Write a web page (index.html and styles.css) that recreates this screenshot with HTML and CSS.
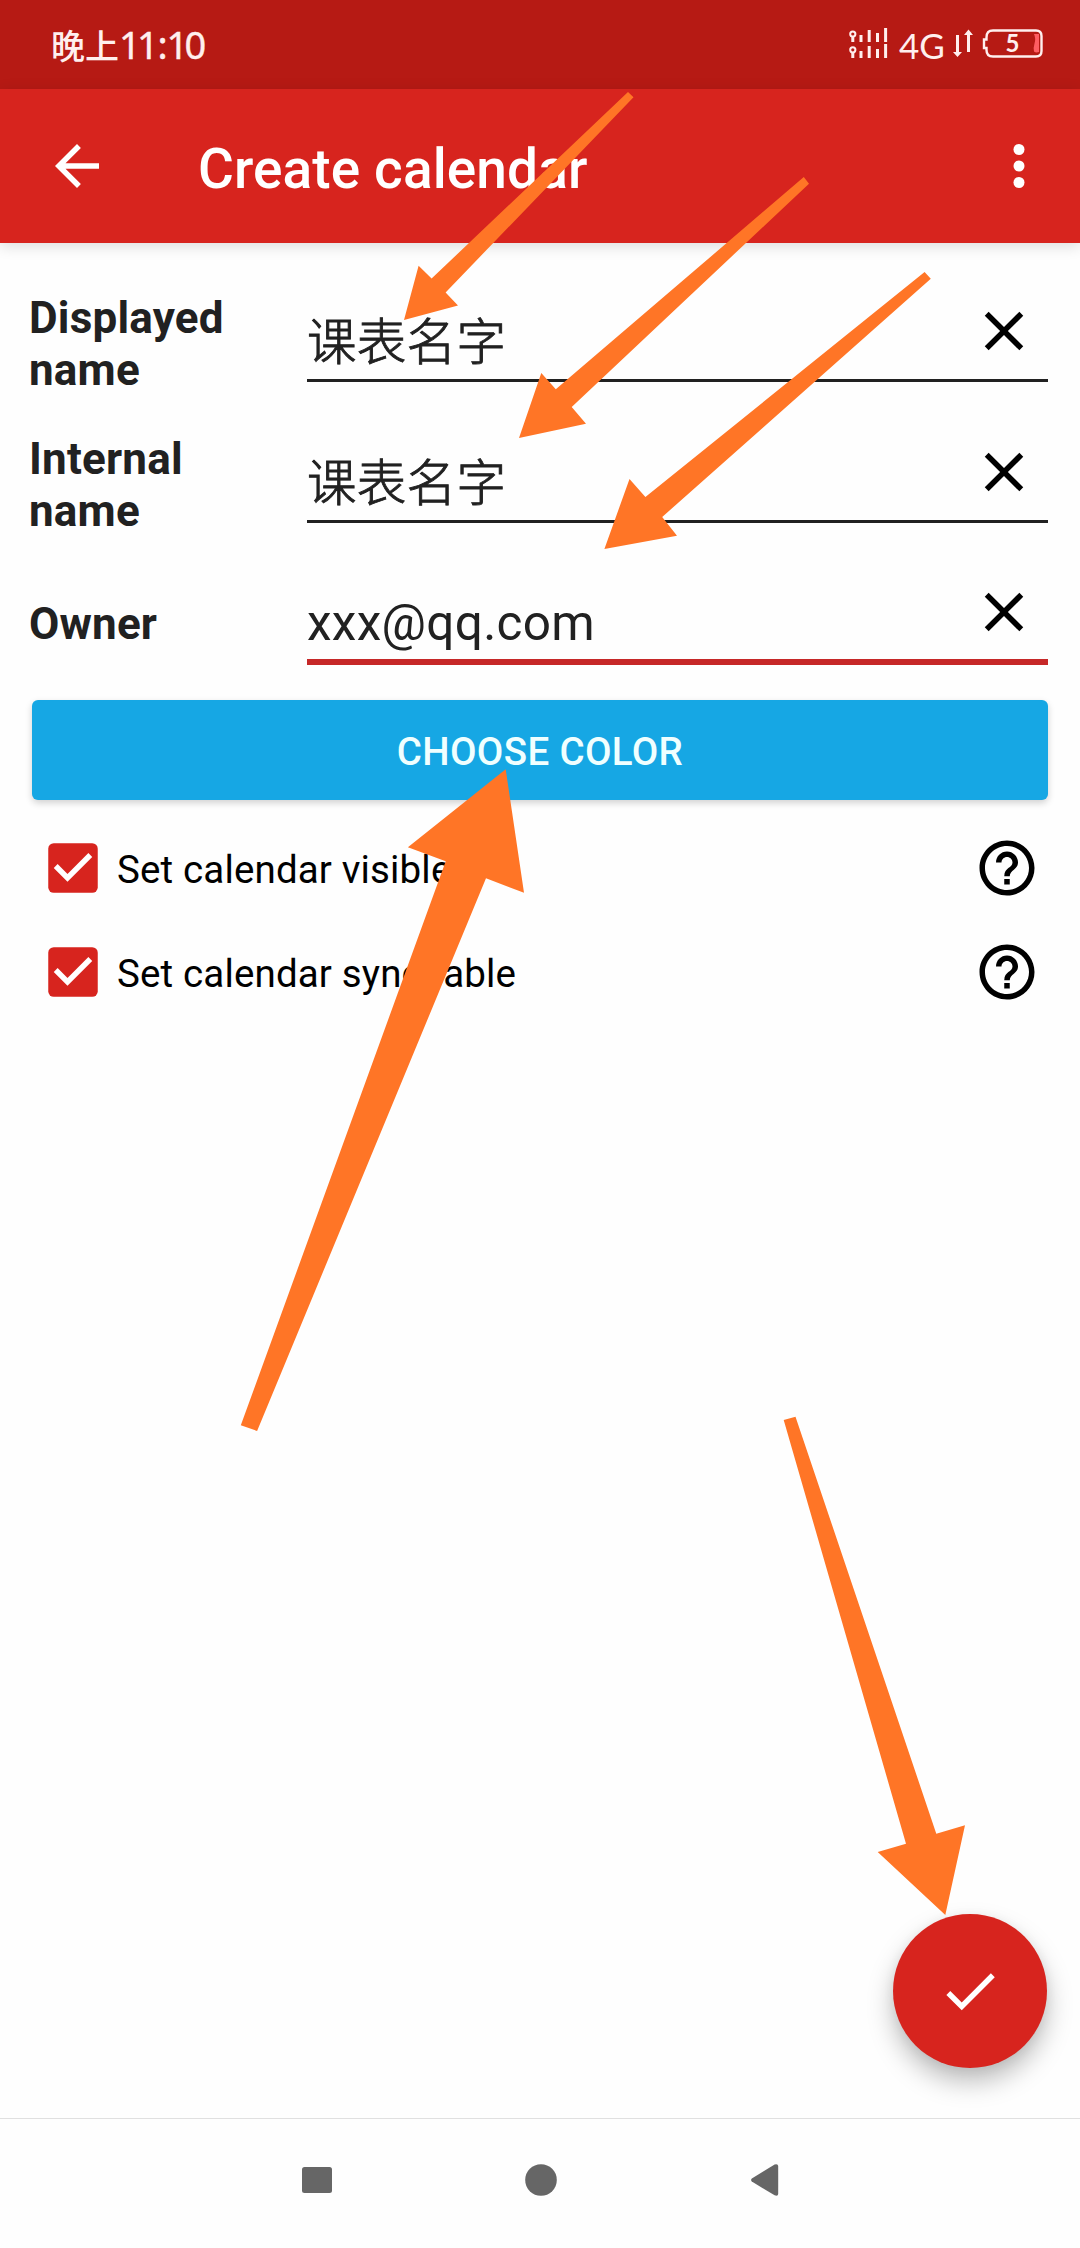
FILE: index.html
```html
<!DOCTYPE html>
<html lang="en">
<head>
<meta charset="utf-8">
<title>Create calendar</title>
<link rel="stylesheet" href="styles.css">
</head>
<body>
<div class="screen">
  <div class="status-bar">
    <div class="clock"><span class="clock-period">晚上</span><span class="clock-time">11<span class="colon">:</span>10</span></div>
    <div class="status-icons">
      <svg class="signal" width="40" height="34" viewBox="0 0 40 34" fill="none" stroke="#ffefee" stroke-width="3">
        <circle cx="3.8" cy="6" r="2.6" stroke-width="2"/><circle cx="3.8" cy="21.8" r="2.6" stroke-width="2"/>
        <path d="M3.8 8v6M12 7v7M20.2 2v12M28.5 5v9M36.6 0v14M3.8 24v6M12 23v7M20.2 18v12M28.5 21v9M36.6 16v14"/>
      </svg>
      <span class="network">4G</span>
      <svg class="traffic" width="20" height="30" viewBox="0 0 20 30" fill="none" stroke="#ffefee" stroke-width="3">
        <path d="M4.5 6v20M15.5 3v20"/>
        <path d="M0 23h9l-4.5 5zM11 6h9l-4.5-5.500z" fill="#ffefee" stroke="none"/>
      </svg>
      <svg class="battery" width="62" height="30" viewBox="0 0 62 30">
        <path d="M4.500 8.500Q4.500 1.500 11 1.500H54Q59.500 1.500 59.500 7V22Q59.500 27.500 54 27.500H11Q4.500 27.500 4.500 21V19H2V10.500H4.500Z" fill="none" stroke="#ffefee" stroke-width="2.400"/>
        <path d="M52 5h5v18q-3 1-5-.5-1-3 .5-8 1.500-5-.5-9.500z" fill="#ff5d62"/>
        <text x="30.500" y="22.500" text-anchor="middle" class="battery-level">5</text>
      </svg>
    </div>
  </div>

  <header class="app-bar">
    <svg class="icon" viewBox="0 0 24 24" fill="#fff"><path d="M20 11H7.830l5.590-5.590L12 4l-8 8 8 8 1.410-1.410L7.830 13H20v-2z"/></svg>
    <h1 class="title">Create calendar</h1>
    <svg class="icon" viewBox="0 0 24 24" fill="#fff"><circle cx="12" cy="6" r="2"/><circle cx="12" cy="12" r="2"/><circle cx="12" cy="18" r="2"/></svg>
  </header>

  <main class="form">
    <div class="row">
      <div class="label">Displayed name</div>
      <div class="field"><span class="value value-cjk">课表名字</span>
        <svg class="icon" viewBox="0 0 24 24"><path d="M19 6.410L17.590 5 12 10.590 6.410 5 5 6.410 10.590 12 5 17.590 6.410 19 12 13.410 17.590 19 19 17.590 13.410 12z"/></svg></div>
    </div>
    <div class="row">
      <div class="label">Internal name</div>
      <div class="field"><span class="value value-cjk">课表名字</span>
        <svg class="icon" viewBox="0 0 24 24"><path d="M19 6.410L17.590 5 12 10.590 6.410 5 5 6.410 10.590 12 5 17.590 6.410 19 12 13.410 17.590 19 19 17.590 13.410 12z"/></svg></div>
    </div>
    <div class="row row-single">
      <div class="label">Owner</div>
      <div class="field focused"><span class="value">xxx@qq.com</span>
        <svg class="icon" viewBox="0 0 24 24"><path d="M19 6.410L17.590 5 12 10.590 6.410 5 5 6.410 10.590 12 5 17.590 6.410 19 12 13.410 17.590 19 19 17.590 13.410 12z"/></svg></div>
    </div>
    <button class="choose" type="button">CHOOSE COLOR</button>
    <div class="option">
      <svg class="icon" viewBox="0 0 24 24"><rect x="3" y="3" width="18" height="18" rx="2" fill="#d7241e"/><path d="M10 17l-5-5 1.410-1.410L10 14.170l7.590-7.590L19 8z" fill="#fff"/></svg>
      <span class="option-text">Set calendar visible</span>
      <svg class="icon" viewBox="0 0 24 24"><path d="M11 18h2v-2h-2v2zm1-16C6.480 2 2 6.480 2 12s4.480 10 10 10 10-4.480 10-10S17.520 2 12 2zm0 18c-4.410 0-8-3.590-8-8s3.590-8 8-8 8 3.590 8 8-3.590 8-8 8zm0-14c-2.210 0-4 1.790-4 4h2c0-1.100.9-2 2-2s2 .9 2 2c0 2-3 1.750-3 5h2c0-2.250 3-2.500 3-5 0-2.210-1.790-4-4-4z"/></svg>
    </div>
    <div class="option">
      <svg class="icon" viewBox="0 0 24 24"><rect x="3" y="3" width="18" height="18" rx="2" fill="#d7241e"/><path d="M10 17l-5-5 1.410-1.410L10 14.170l7.590-7.590L19 8z" fill="#fff"/></svg>
      <span class="option-text">Set calendar synchable</span>
      <svg class="icon" viewBox="0 0 24 24"><path d="M11 18h2v-2h-2v2zm1-16C6.480 2 2 6.480 2 12s4.480 10 10 10 10-4.480 10-10S17.520 2 12 2zm0 18c-4.410 0-8-3.590-8-8s3.590-8 8-8 8 3.590 8 8-3.590 8-8 8zm0-14c-2.210 0-4 1.790-4 4h2c0-1.100.9-2 2-2s2 .9 2 2c0 2-3 1.750-3 5h2c0-2.250 3-2.500 3-5 0-2.210-1.790-4-4-4z"/></svg>
    </div>
  </main>

  <nav class="nav-bar">
    <svg width="30" height="32" viewBox="0 0 30 32"><rect y="3" width="30" height="26" rx="2.500"/></svg>
    <svg width="32" height="32" viewBox="0 0 32 32"><circle cx="16" cy="16" r="15.800"/></svg>
    <svg width="28" height="32" viewBox="0 0 28 32"><path d="M.8 14.600L23.600.5Q27 -.6 27.200 2V30Q27 32.600 23.600 31.300L.8 17.500Q-.6 16 .8 14.600z"/></svg>
  </nav>

  <div class="fab"><svg class="icon" viewBox="0 0 24 24" fill="#fff"><path d="M9 16.170L4.830 12l-1.420 1.410L9 19 21 7l-1.410-1.410z"/></svg></div>

  <!-- Guide arrows laid over the form -->
  <svg class="arrows" viewBox="0 0 1080 2248" fill="#ff7526">
    <path d="M628 92L633.500 97.200 445.600 292.500 458 305.500 404 320 418.600 265.700 431.600 278.500z"/>
    <path d="M803.800 177L809 183.700 571.700 407 586 423.700 519 438 541.300 373 555.800 389.300z"/>
    <path d="M924.600 272L930.800 278.700 662.200 517 677 535.700 604.400 549 629.500 479 645.400 497z"/>
    <path d="M240.800 1425.300L257.100 1431 486 878.300 524 892.700 505.700 769.300 407.900 847.300 445.700 861.300z"/>
    <path d="M783.700 1420L795.500 1416.700 936.300 1833.700 965 1825.300 945.300 1915 877.700 1852 906 1843.700z"/>
  </svg>
</div>
</body>
</html>
```

FILE: styles.css
```css
* { box-sizing: border-box; }

body {
  margin: 0;
  background: #fefefe;
  color: #212121;
  font-family: Roboto, "Noto Sans CJK SC", sans-serif;
}

.screen {
  position: relative;
  display: flex;
  flex-direction: column;
  width: 1080px;
  height: 2248px;
  overflow: hidden;
}

svg { display: block; flex: none; }
.icon { width: 66px; height: 66px; }

.status-bar {
  display: flex;
  justify-content: space-between;
  height: 89px;
  padding: 0 36px 0 51px;
  background: #b61a14;
  color: #ffefee;
}

.clock { display: flex; align-items: baseline; height: 88px; line-height: 88px; }
.clock-period { font-family: "Noto Sans CJK SC", sans-serif; font-size: 34px; font-weight: 500; }
.clock-time { font-family: "Noto Sans", sans-serif; font-size: 38px; letter-spacing: -3.700px; -webkit-text-stroke: .4px #ffefee; }
.colon { padding: 0 2.500px; }

.status-icons { display: flex; align-items: flex-start; padding-top: 28px; }
.network { width: 47px; margin: -3px 7px 0 10px; font: 400 35px/40px Lato, sans-serif; }
.traffic { margin-top: 1px; }
.battery { margin: 1px 0 0 9px; }
.battery-level { fill: #ffefee; font: 700 24px Lato, sans-serif; }

.app-bar {
  z-index: 1;
  display: flex;
  align-items: center;
  height: 154px;
  padding: 0 28px 0 44px;
  background: #d7241e;
  box-shadow: 0 3px 14px rgba(0, 0, 0, .14);
}
.title { flex: 1; margin: 6px 0 0 88px; color: #fff; font-size: 55px; font-weight: 500; line-height: 64px; letter-spacing: .100px; }

.form { flex: 1; padding: 31px 32px 0 29px; }

.row { display: flex; height: 141px; }
.label { width: 278px; padding: 18px 40px 0 0; font-size: 44px; font-weight: 700; line-height: 52px; letter-spacing: .200px; }
.row-single .label { padding-top: 42px; }

.field {
  flex: 1;
  display: flex;
  justify-content: space-between;
  height: 108px;
  padding: 24px 11px 0 0;
  border-bottom: 3px solid #212121;
}
.value { margin-top: 14px; font-size: 49.500px; line-height: 60px; letter-spacing: .300px; }
.value-cjk { margin-top: 15px; font-weight: 300; -webkit-text-stroke: .9px #212121; }
.focused { height: 109px; padding-top: 23px; border-bottom: 6px solid #c62828; }

.choose {
  display: block;
  width: 1016px;
  height: 100px;
  margin: 3px 0 0 3px;
  padding: 3px 0 0;
  border: 0;
  border-radius: 6px;
  background: #16a7e4;
  box-shadow: 0 3px 7px rgba(0, 0, 0, .18);
  color: #f0ffff;
  font: 500 38.500px/97px Roboto, sans-serif;
  letter-spacing: .350px;
}

.option { display: flex; align-items: center; height: 104px; padding: 0 8px 0 11px; color: #000; }
.choose + .option { margin-top: 16px; }
.option-text { flex: 1; margin: 2px 0 0 11px; font-size: 38.500px; letter-spacing: .150px; }

.nav-bar {
  display: flex;
  justify-content: center;
  gap: 193.500px;
  height: 130px;
  padding: 45px 0 0;
  border-top: 1px solid #e0e0e0;
  fill: #666;
}

.fab {
  position: absolute;
  right: 33px;
  bottom: 180px;
  display: grid;
  place-items: center;
  width: 154px;
  height: 154px;
  border-radius: 50%;
  background: #d7241e;
  box-shadow: 0 14px 26px rgba(0, 0, 0, .26), 0 2px 12px rgba(0, 0, 0, .06);
}

.arrows { position: absolute; inset: 0; z-index: 2; width: 1080px; height: 2248px; }
```
